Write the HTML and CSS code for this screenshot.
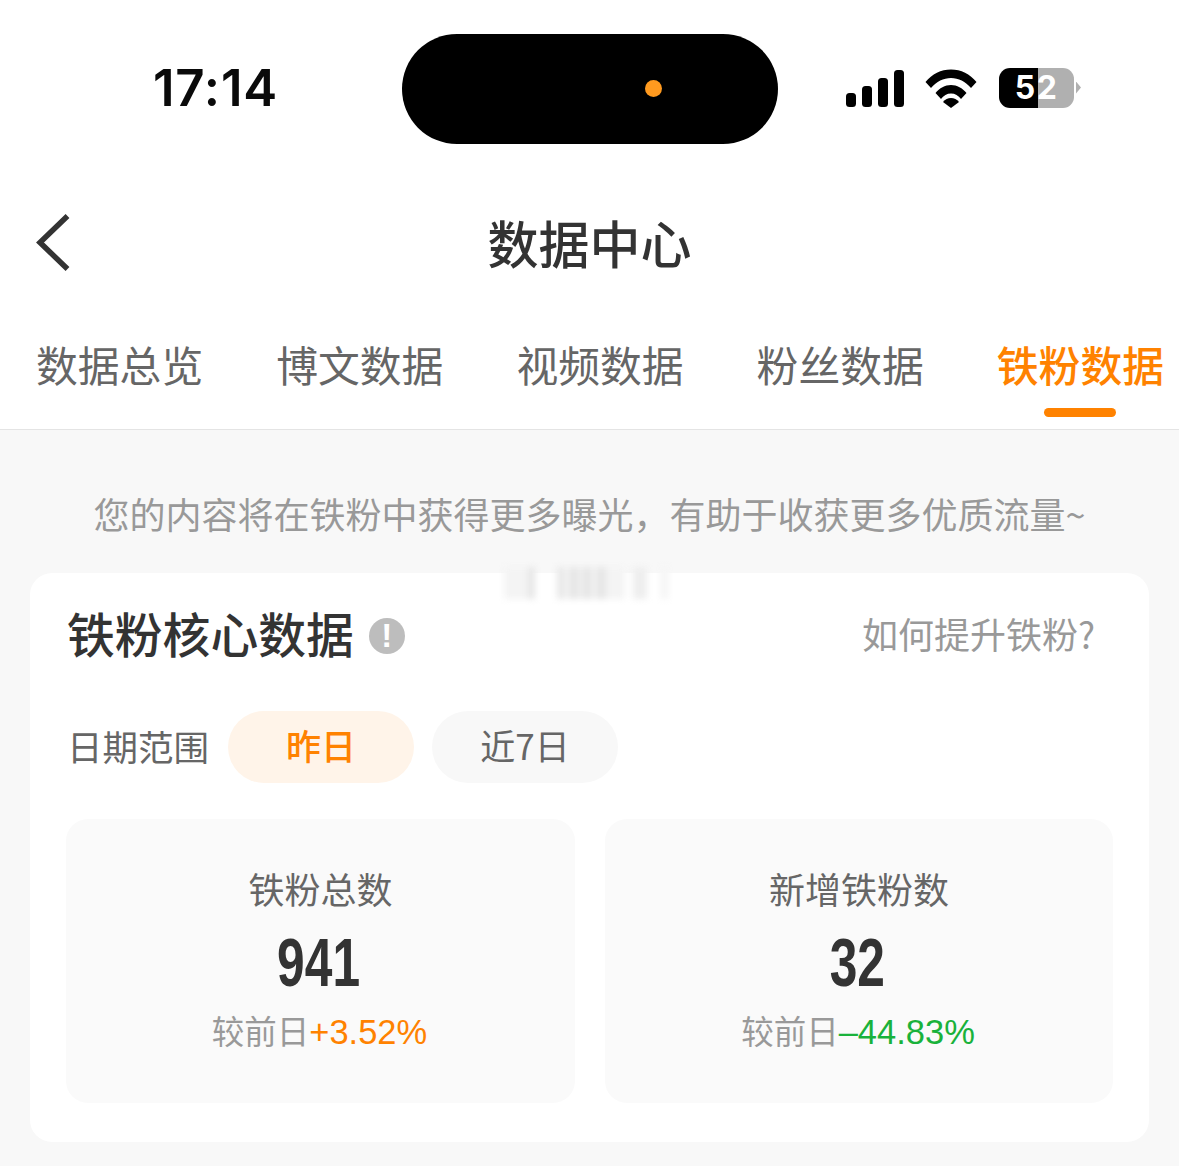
FILE: index.html
```html
<!DOCTYPE html>
<html lang="zh-CN">
<head>
<meta charset="utf-8">
<title>数据中心</title>
<link rel="stylesheet" href="styles.css">
</head>
<body>
<div class="top">
  <div class="status">
    <div class="time">17:14</div>
    <div class="island"><span class="dot"></span></div>
    <div class="sys">
      <svg class="signal" width="60" height="38" viewBox="0 0 60 38"><rect x="1" y="23" width="10" height="14" rx="3.500"/><rect x="17" y="16" width="10" height="21" rx="3.500"/><rect x="33" y="8" width="10" height="29" rx="3.500"/><rect x="49" y="0" width="10" height="37" rx="3.500"/></svg>
      <svg class="wifi" width="52" height="38" viewBox="0 0 52 38"><path d="M0.500 13C7 5 16 0.500 26 0.500S45 5 51.500 13L46 19C40.500 12.500 33.500 9 26 9S11.500 12.500 6 19z"/><path d="M10.500 24C14.500 19 20 16 26 16s11.500 3 15.500 8L36 30C33.500 26.500 30 24.500 26 24.500S18.500 26.500 16 30z"/><path d="M18 33C20 30.500 23 29 26 29s6 1.500 8 4l-8 6z"/></svg>
      <div class="battery">
        <div class="batt-body"><span class="batt-num">52</span></div>
        <span class="batt-cap"></span>
      </div>
    </div>
  </div>
  <header class="nav">
    <svg class="back" width="36" height="60" viewBox="0 0 36 60"><path d="M32.500 3 5 29.500 32.500 56" fill="none" stroke="#333" stroke-width="5.500"/></svg>
    <h1 class="title">数据中心</h1>
  </header>
  <nav class="tabs">
    <a class="tab">数据总览</a>
    <a class="tab">博文数据</a>
    <a class="tab">视频数据</a>
    <a class="tab">粉丝数据</a>
    <a class="tab active">铁粉数据</a>
  </nav>
</div>
<main class="content">
  <p class="notice">您的内容将在铁粉中获得更多曝光，有助于收获更多优质流量~</p>
  <section class="card">
    <div class="smudge"></div>
    <div class="card-head">
      <div class="card-title-wrap">
        <h2 class="card-title">铁粉核心数据</h2>
        <span class="info">!</span>
      </div>
      <a class="help">如何提升铁粉?</a>
    </div>
    <div class="range">
      <span class="range-label">日期范围</span>
      <span class="pill pill-on">昨日</span>
      <span class="pill">近7日</span>
    </div>
    <div class="stats">
      <div class="stat">
        <div class="stat-label">铁粉总数</div>
        <div class="stat-num"><span class="digits">941</span></div>
        <div class="stat-delta">较前日<span class="up">+3.52%</span></div>
      </div>
      <div class="stat">
        <div class="stat-label">新增铁粉数</div>
        <div class="stat-num"><span class="digits">32</span></div>
        <div class="stat-delta">较前日<span class="down">–44.83%</span></div>
      </div>
    </div>
  </section>
</main>
</body>
</html>
```
FILE: styles.css
```css
* { box-sizing: border-box; }
html, body { margin: 0; padding: 0; }
body {
  width: 1179px;
  height: 1166px;
  overflow: hidden;
  background: #f8f8f8;
  font-family: "Noto Sans CJK SC", "Liberation Sans", sans-serif;
  color: #333;
}
.top { background: #fff; border-bottom: 1px solid #e4e4e4; height: 430px; }
.status {
  height: 178px;
  padding-top: 34px;
  display: flex;
  align-items: flex-start;
}
.time {
  width: 402px;
  padding-left: 153px;
  height: 110px;
  line-height: 108px;
  font-family: Inter, "Liberation Sans", sans-serif;
  font-weight: 600;
  font-size: 51px;
  letter-spacing: 0.800px;
  color: #0a0a0a;
}
.island {
  width: 376px;
  height: 110px;
  border-radius: 55px;
  background: #000;
  position: relative;
}
.dot {
  position: absolute;
  left: 243px;
  top: 46px;
  width: 17px;
  height: 17px;
  border-radius: 50%;
  background: #ff9a1f;
}
.sys {
  display: flex;
  align-items: center;
  height: 110px;
  padding-left: 67px;
}
.signal { fill: #000; display: block; margin-top: -1px; }
.wifi { fill: #000; display: block; margin-left: 20px; margin-top: -3px; overflow: visible; }
.battery { display: flex; align-items: center; margin-left: 22px; margin-top: -3px; }
.batt-body {
  width: 75px;
  height: 40px;
  border-radius: 11px;
  background: linear-gradient(90deg, #000 0 52%, #b0b0b0 52% 100%);
  text-align: center;
  line-height: 40px;
}
.batt-num {
  font-family: Inter, "Liberation Sans", sans-serif;
  font-weight: 700;
  font-size: 32px;
  color: #fff;
  letter-spacing: 1.500px;
}
.batt-cap {
  width: 5px;
  height: 12px;
  margin-left: 2px;
  background: #b0b0b0;
  clip-path: polygon(0 0, 100% 50%, 0 100%);
}
.nav {
  position: relative;
  height: 134px;
  display: flex;
  justify-content: center;
  align-items: center;
}
.back { position: absolute; left: 35px; top: 35px; }
.title { margin: -6px 0 0; font-size: 51px; font-weight: 500; line-height: 128px; color: #333; }
.tabs {
  display: flex;
  gap: 73px;
  padding-left: 36px;
  height: 117px;
}
.tab {
  position: relative;
  font-size: 41.800px;
  line-height: 104px;
  color: #666;
  white-space: nowrap;
}
.tab.active { color: #ff8200; font-weight: 500; }
.tab.active::after {
  content: "";
  position: absolute;
  left: 47px;
  bottom: 12px;
  width: 72px;
  height: 9px;
  border-radius: 5px;
  background: #ff8200;
}
.content { padding: 0 30px; }
.notice {
  margin: 0;
  height: 143px;
  padding-top: 58px;
  line-height: 50px;
  font-size: 36px;
  color: #999;
  text-align: center;
  white-space: nowrap;
}
.card {
  position: relative;
  background: #fff;
  height: 569px;
  border-radius: 22px;
  padding: 0 36px;
}
.smudge {
  position: absolute;
  left: 474px;
  top: -6px;
  width: 170px;
  height: 32px;
  background:
    linear-gradient(90deg,
      #f4f4f4 0 14%, #e6e6e6 14% 18%, transparent 18% 31%,
      #e8e8e8 31% 36%, #f6f6f6 36% 38%, #e6e6e6 38% 44%, #f6f6f6 44% 46%,
      #e6e6e6 46% 52%, #f6f6f6 52% 54%, #e6e6e6 54% 60%, #f4f4f4 60% 71%,
      transparent 71% 76%, #eeeeee 76% 84%, transparent 84% 92%, #f6f6f6 92% 97%, transparent 97%);
  filter: blur(3px);
}
.card-head {
  position: relative;
  height: 126px;
  display: flex;
  align-items: center;
  justify-content: space-between;
  padding: 0 18px 0 2px;
}
.card-title-wrap { display: flex; align-items: center; gap: 15px; }
.card-title { margin: -6px 0 0 -1px; font-size: 47.800px; font-weight: 500; color: #333; line-height: 1; }
.info {
  width: 36px;
  height: 36px;
  border-radius: 50%;
  background: #bdbdbd;
  color: #fff;
  font-family: "Liberation Sans", sans-serif;
  font-weight: 700;
  font-size: 33px;
  line-height: 36px;
  text-align: center;
}
.help { font-size: 36px; color: #999; line-height: 1; margin-top: -6px; }
.range { display: flex; align-items: center; height: 72px; margin-top: 12px; padding-left: 1px; }
.range-label { font-size: 35.500px; color: #666; width: 161px; margin-top: -4px; }
.pill {
  width: 186px;
  height: 72px;
  border-radius: 36px;
  background: #f8f8f8;
  color: #666;
  font-size: 35px;
  line-height: 68px;
  text-align: center;
  margin-right: 18px;
}
.pill-on { background: #fff4e9; color: #ff8200; font-weight: 500; }
.stats { display: grid; grid-template-columns: 509px 508px; gap: 30px; margin-top: 36px; }
.stat {
  height: 284px;
  background: #fafafa;
  border-radius: 22px;
  text-align: center;
  padding-top: 44px;
}
.stat-label { font-size: 36px; line-height: 50px; color: #666; }
.stat-num {
  margin-top: 9px;
  padding-right: 3px;
  font-family: "Liberation Sans", sans-serif;
  font-weight: 700;
  font-size: 69px;
  line-height: 81px;
  color: #333;
}
.digits { display: inline-block; transform: scaleX(.72); }
.stat-delta {
  padding-right: 2px;
  font-size: 32.500px;
  line-height: 54px;
  color: #999;
  white-space: nowrap;
}
.up, .down { font-family: "Liberation Sans", sans-serif; font-size: 34.500px; }
.up { color: #ff8200; }
.down { color: #19b23b; }
```
